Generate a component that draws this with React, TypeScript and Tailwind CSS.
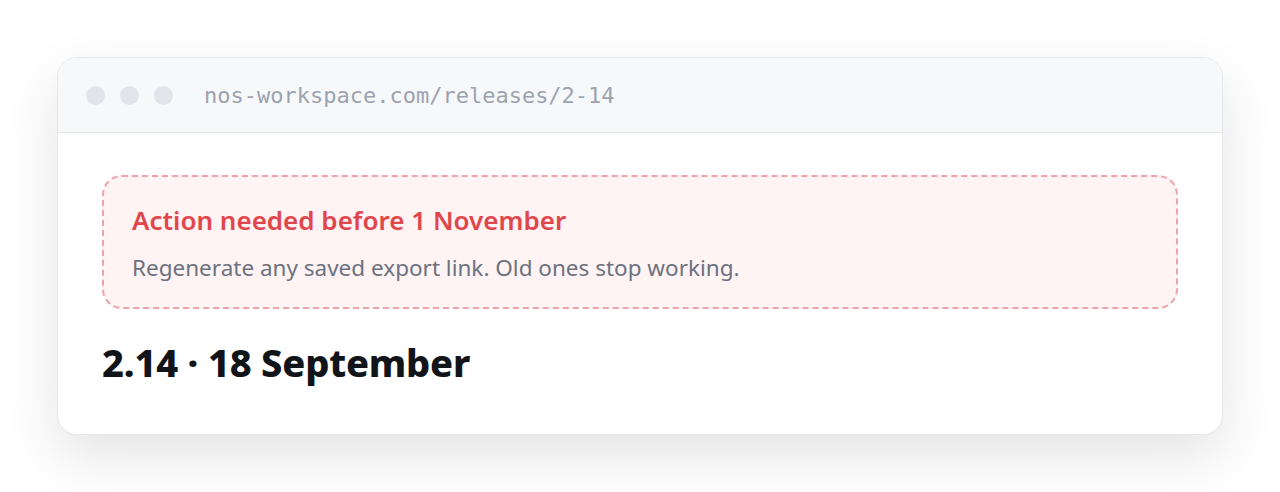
export default function App() {
  return (
    <div className="w-[1280px] h-[492px] bg-white pt-[57px] pl-[57px]" style={{ fontFamily: '"Noto Sans", "Open Sans", sans-serif' }}>
      <div className="w-[1166px] h-[378px] rounded-[20px] border border-[#e5e7eb] bg-white shadow-[0_22px_55px_rgba(0,0,0,0.11)] overflow-hidden flex flex-col">
        <div className="h-[75px] shrink-0 bg-[#f7f8f9] border-b border-[#e3e5e8] flex items-center pl-[28px]">
          <div className="flex gap-[15px]">
            <span className="w-[19px] h-[19px] rounded-full bg-[#e1e4e8]" />
            <span className="w-[19px] h-[19px] rounded-full bg-[#e1e4e8]" />
            <span className="w-[19px] h-[19px] rounded-full bg-[#e1e4e8]" />
          </div>
          <span className="ml-[31px] text-[22px] text-[#9ca3af]" style={{ fontFamily: '"DejaVu Sans Mono", "Liberation Mono", monospace' }}>
            nos-workspace.com/releases/2-14
          </span>
        </div>
        <div className="px-[44px] pt-[42px]">
          <div className="rounded-[20px] border-2 border-dashed border-[#eca3aa] bg-[#fff3f4] px-[28px] pt-[26px] pb-[24px]">
            <div className="text-[26px] font-semibold text-[#e0474c] leading-[34px]">Action needed before 1 November</div>
            <div className="mt-[16px] text-[22.5px] text-[#6b7280] leading-[30px]">Regenerate any saved export link. Old ones stop working.</div>
          </div>
          <div className="mt-[29px] text-[38px] font-extrabold text-[#111418] leading-[48px] tracking-[-0.2px]">2.14 · 18 September</div>
        </div>
      </div>
    </div>
  );
}
